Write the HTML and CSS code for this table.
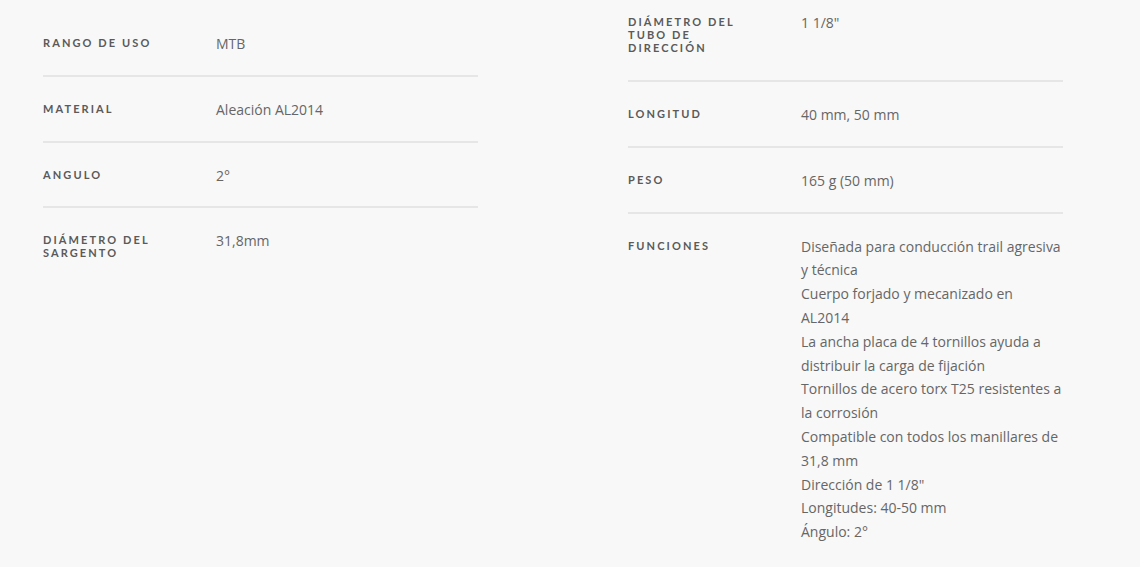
FILE: index.html
```html
<!DOCTYPE html>
<html lang="es">
<head>
<meta charset="utf-8">
<title>Especificaciones</title>
<link rel="stylesheet" href="styles.css">
</head>
<body>
<div class="specs">
  <div class="col col-left">
    <div class="row"><div class="label">Rango de uso</div><div class="value">MTB</div></div>
    <div class="row"><div class="label">Material</div><div class="value">Aleación AL2014</div></div>
    <div class="row"><div class="label">Angulo</div><div class="value">2°</div></div>
    <div class="row last"><div class="label">Diámetro del sargento</div><div class="value">31,8mm</div></div>
  </div>
  <div class="col col-right">
    <div class="row tall"><div class="label">Diámetro del tubo de dirección</div><div class="value">1 1/8"</div></div>
    <div class="row"><div class="label">Longitud</div><div class="value">40 mm, 50 mm</div></div>
    <div class="row"><div class="label">Peso</div><div class="value">165 g (50 mm)</div></div>
    <div class="row last"><div class="label">Funciones</div><div class="value">Diseñada para conducción trail agresiva y técnica<br>Cuerpo forjado y mecanizado en AL2014<br>La ancha placa de 4 tornillos ayuda a distribuir la carga de fijación<br>Tornillos de acero torx T25 resistentes a la corrosión<br>Compatible con todos los manillares de 31,8 mm<br>Dirección de 1 1/8"<br>Longitudes: 40-50 mm<br>Ángulo: 2°</div></div>
  </div>
</div>
</body>
</html>
```
FILE: styles.css
```css
html, body {
  margin: 0;
  padding: 0;
  background: #f8f8f8;
}
body {
  font-family: "Open Sans", "Liberation Sans", sans-serif;
  color: #666;
}
.specs {
  display: grid;
  grid-template-columns: 435px 435px;
  column-gap: 150px;
  padding-left: 43px;
  align-items: start;
}
.col-left {
  padding-top: 11px;
}
.col-right {
  margin-top: -10px;
}
.row {
  display: flex;
  padding: 21px 0 19px;
  border-bottom: 2px solid #e6e6e6;
}
.row.last {
  border-bottom: none;
}
.row.tall {
  padding-bottom: 26px;
}
.label {
  width: 128px;
  flex: none;
  margin-right: 45px;
  padding-top: 4px;
  font-family: "Lato", "Liberation Sans", sans-serif;
  font-weight: 700;
  font-size: 11px;
  line-height: 13px;
  letter-spacing: 2.1px;
  text-transform: uppercase;
  color: #5a5a5a;
}
.value {
  flex: 1;
  font-size: 14px;
  line-height: 1.7;
  color: #666;
}
```
